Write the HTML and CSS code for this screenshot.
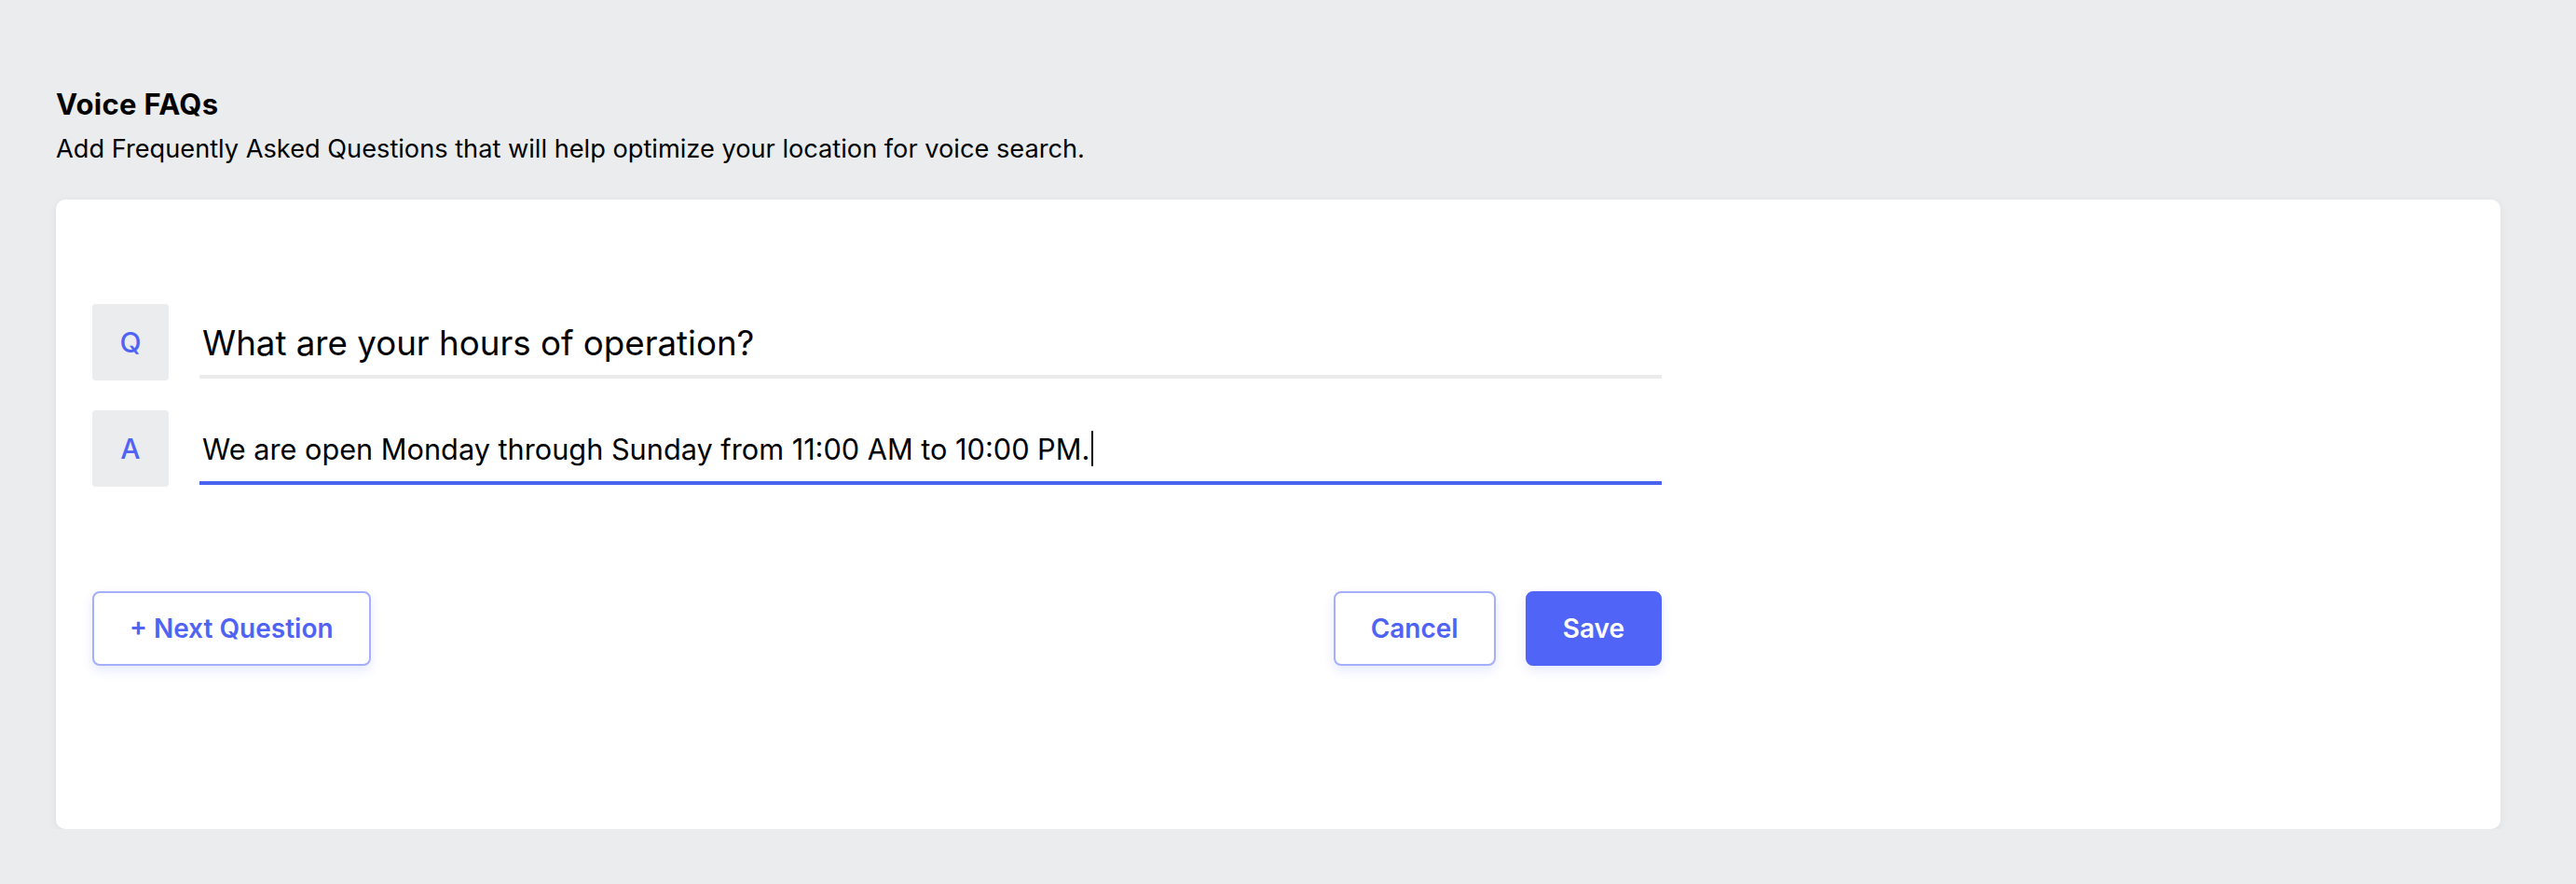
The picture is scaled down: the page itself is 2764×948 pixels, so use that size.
FILE: index.html
```html
<!DOCTYPE html>
<html lang="en">
<head>
<meta charset="utf-8">
<title>Voice FAQs</title>
<link rel="stylesheet" href="styles.css">
</head>
<body>
<div class="page">
  <h1 class="title">Voice FAQs</h1>
  <p class="subtitle">Add Frequently Asked Questions that will help optimize your location for voice search.</p>
  <div class="card">
    <div class="faq">
      <div class="row">
        <div class="badge">Q</div>
        <div class="field field-q">What are your hours of operation?</div>
      </div>
      <div class="row">
        <div class="badge">A</div>
        <div class="field field-a is-active">We are open Monday through Sunday from 11:00 AM to 10:00 PM.<span class="caret"></span></div>
      </div>
      <div class="actions">
        <button class="btn btn-outline">+ Next Question</button>
        <div class="actions-right">
          <button class="btn btn-outline">Cancel</button>
          <button class="btn btn-primary">Save</button>
        </div>
      </div>
    </div>
  </div>
</div>
</body>
</html>
```

FILE: styles.css
```css
* { box-sizing: border-box; }

html, body {
  margin: 0;
  background: #ebecee;
  font-family: Inter, "Noto Sans", "Liberation Sans", sans-serif;
  color: #000;
}

.page {
  padding: 94px 81px 0 60px;
}

.title {
  margin: 0;
  font-size: 31px;
  font-weight: 700;
  letter-spacing: 0.3px;
  line-height: 36px;
}

.subtitle {
  margin: 13px 0 0;
  font-size: 27.2px;
  font-weight: 400;
  line-height: 33px;
}

.card {
  margin-top: 38px;
  height: 675px;
  background: #fff;
  border-radius: 10px;
  box-shadow: 0 2px 10px rgba(0, 0, 0, 0.06);
  padding: 112px 39px 0;
}

.faq {
  width: 1684px;
  display: flex;
  flex-direction: column;
  gap: 32px;
}

.row {
  display: flex;
  align-items: flex-start;
  gap: 33px;
}

.badge {
  flex: none;
  width: 82px;
  height: 82px;
  border-radius: 4px;
  background: #ebecee;
  color: #4f63f5;
  font-size: 30px;
  font-weight: 500;
  display: flex;
  align-items: center;
  justify-content: center;
}

.field {
  flex: 1;
  height: 80px;
  border-bottom: 4px solid #ebebeb;
  display: flex;
  align-items: center;
  padding: 6px 0 0 3px;
  white-space: nowrap;
}

.field-q {
  font-size: 36.7px;
}

.field-a {
  font-size: 30.7px;
}

.field.is-active {
  border-bottom-color: #4a63ee;
}

.caret {
  display: inline-block;
  width: 2px;
  height: 38px;
  background: #000;
  margin-left: 2px;
}

.actions {
  margin-top: 80px;
  display: flex;
  justify-content: space-between;
}

.actions-right {
  display: flex;
  gap: 32px;
}

.btn {
  height: 80px;
  padding: 0 38px;
  border-radius: 8px;
  font-family: inherit;
  font-size: 28px;
  font-weight: 600;
  cursor: pointer;
  box-shadow: 0 5px 12px rgba(79, 99, 247, 0.14);
}

.btn-outline {
  background: #fff;
  color: #4f63f5;
  border: 2px solid #a4aefb;
}

.btn-primary {
  background: #5065f7;
  color: #fff;
  border: 2px solid #5065f7;
}
```
